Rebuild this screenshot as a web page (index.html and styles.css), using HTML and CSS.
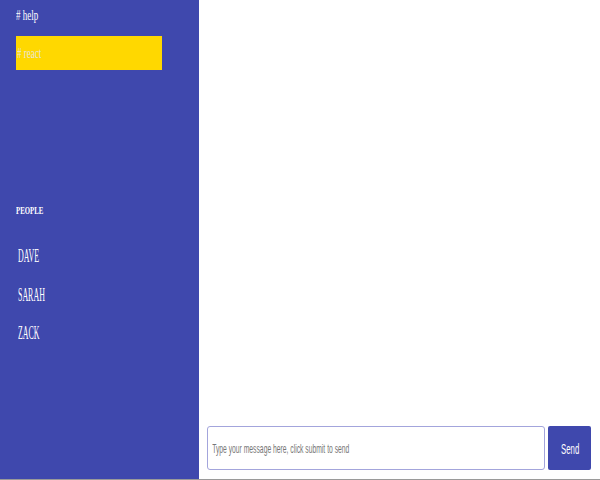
FILE: index.html
```html
<!DOCTYPE html>
<html lang="en">
<head>
<meta charset="utf-8">
<title>Chat</title>
<link rel="stylesheet" href="styles.css">
</head>
<body>
<div class="app">
  <aside class="sidebar">
    <ul class="channels">
      <li class="channel"><span class="sq sq-ch"># help</span></li>
      <li class="channel active"><span class="sq sq-ch"># react</span></li>
    </ul>
    <h3 class="people-title"><span class="sq sq-title">PEOPLE</span></h3>
    <ul class="people">
      <li class="person"><span class="sq sq-person">DAVE</span></li>
      <li class="person"><span class="sq sq-person">SARAH</span></li>
      <li class="person"><span class="sq sq-person">ZACK</span></li>
    </ul>
  </aside>
  <main class="main">
    <div class="messages"></div>
    <form class="composer">
      <div class="input-box">
        <input class="msg-input" type="text" placeholder="Type your message here, click submit to send">
      </div>
      <button class="send" type="button"><span class="sq sq-send">Send</span></button>
    </form>
  </main>
</div>
</body>
</html>
```
FILE: styles.css
```css
* { box-sizing: border-box; }
html, body { margin: 0; padding: 0; height: 100%; }
body {
  font-family: "Liberation Serif", "Times New Roman", serif;
  background: #ffffff;
  overflow: hidden;
}
.app {
  display: flex;
  height: 480px;
  border-bottom: 1px solid #9a9a9a;
}
.sidebar {
  width: 199px;
  flex: none;
  background: #3f48ad;
  color: #ffffff;
  padding: 0 0 0 16px;
}
.channels, .people { list-style: none; margin: 0; padding: 0; }
.sq { display: inline-block; transform-origin: left center; white-space: nowrap; }
.channel {
  font-size: 15px;
  height: 34px;
  line-height: 30px;
  width: 146px;
}
.channel.active {
  background: #ffd800;
  color: #e8e6d8;
  margin-top: 2px;
  line-height: 34px;
  padding-left: 1px;
}
.sq-ch { transform: scaleX(0.6); }
.people-title {
  margin: 133px 0 0 0;
  font-size: 11px;
  font-weight: bold;
  line-height: 14px;
}
.sq-title { transform: scaleX(0.62); }
.people { margin-top: 30px; padding-left: 2px; }
.person {
  font-size: 18px;
  height: 38.5px;
  line-height: 18px;
}
.sq-person { transform: scaleX(0.44); }
.main {
  flex: 1;
  display: flex;
  flex-direction: column;
  min-width: 0;
}
.messages { flex: 1; }
.composer {
  display: flex;
  gap: 3px;
  padding: 0 9px 9px 8px;
  margin: 0;
}
.input-box {
  flex: 1;
  height: 44px;
  border: 1px solid #a3a5dc;
  border-radius: 3px;
  overflow: hidden;
  background: #fff;
}
.msg-input {
  width: 192%;
  height: 42px;
  border: 0;
  outline: none;
  padding: 0 0 0 8px;
  font-family: "Liberation Sans", Arial, sans-serif;
  font-size: 13px;
  transform: scaleX(0.52);
  transform-origin: left center;
  background: transparent;
}
.msg-input::placeholder { color: #777777; }
.send {
  width: 43px;
  height: 44px;
  flex: none;
  border: 0;
  border-radius: 2px;
  background: #3f48ad;
  color: #ffffff;
  font-family: "Liberation Sans", Arial, sans-serif;
  font-size: 15px;
  padding: 0 0 0 13px;
  text-align: left;
}
.sq-send { transform: scaleX(0.52); }
```
